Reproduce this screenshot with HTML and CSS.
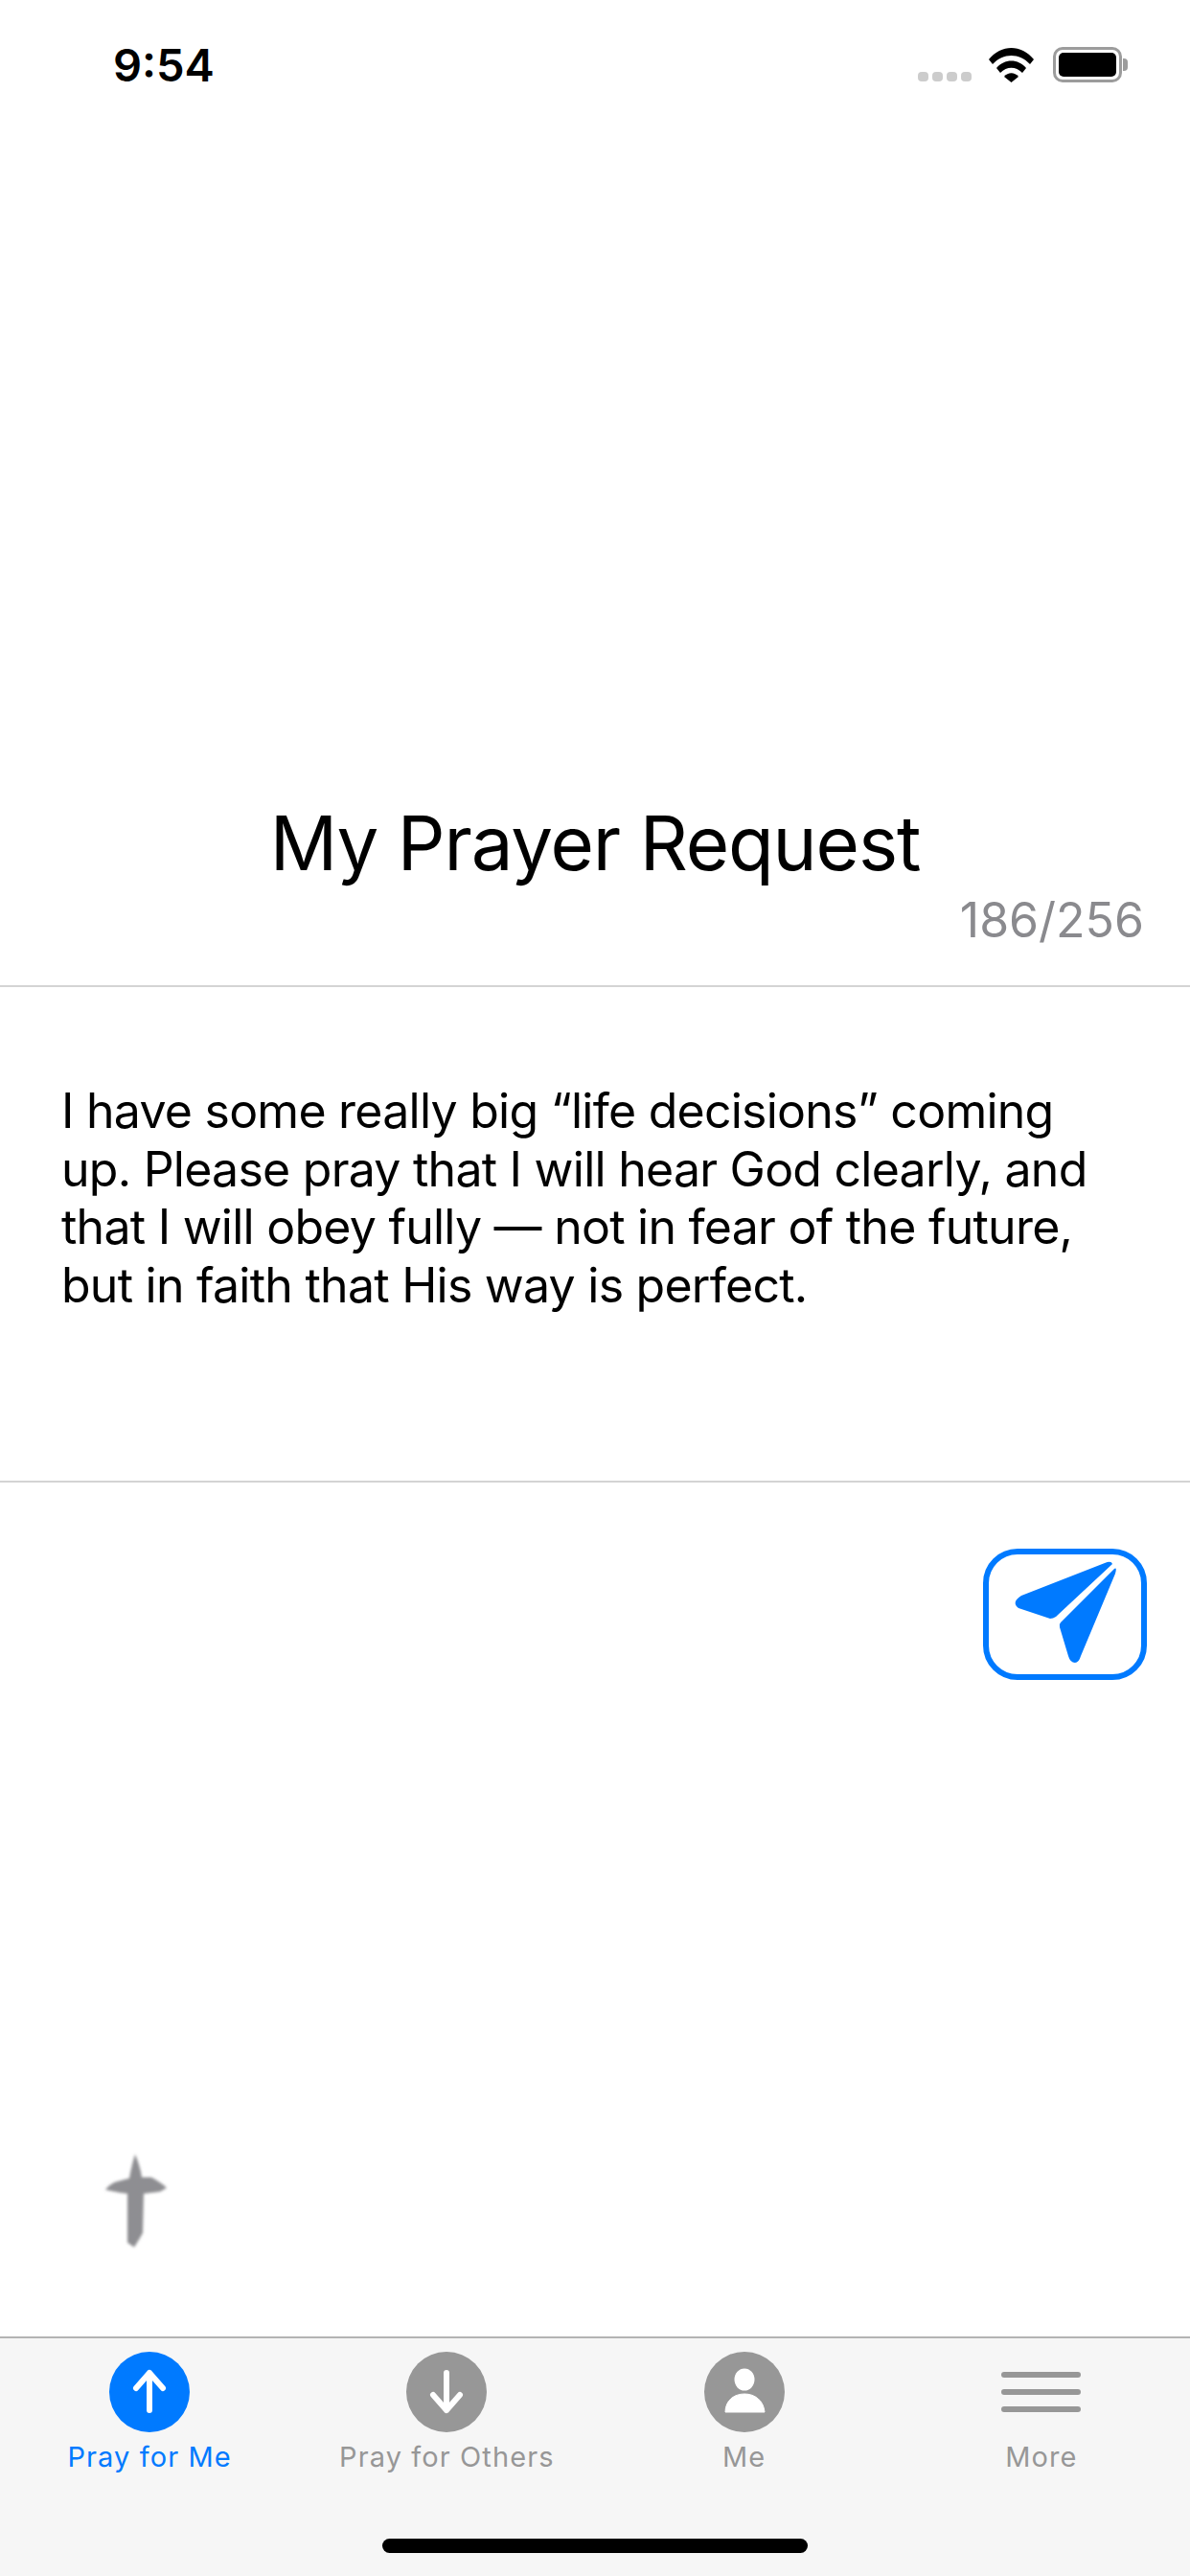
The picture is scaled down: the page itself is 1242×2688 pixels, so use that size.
FILE: index.html
```html
<!DOCTYPE html>
<html lang="en">

<head>
    <meta charset="UTF-8">
    <meta name="viewport" content="width=device-width, initial-scale=1.0">
    <title>My Prayer Request</title>
    <link rel="stylesheet" href="styles.css">
</head>

<body>
    <div class="container">
        <div class="status-bar">
            <div class="time">9:54</div>
            <div class="status-icons">
                <div class="signal">
                    <span class="signal-dot"></span>
                    <span class="signal-dot"></span>
                    <span class="signal-dot"></span>
                    <span class="signal-dot"></span>
                </div>
                <svg class="wifi" width="47" height="36" viewBox="0 0 47 36">
                    <path d="M0 12 C13 -4 34 -4 47 12 L43 17 C32 5 15 5 4 17 Z" fill="#000" />
                    <path d="M8 21 C16 11 31 11 39 21 L35 26 C28 19 19 19 12 26 Z" fill="#000" />
                    <path d="M16 30 C20 25 27 25 31 30 L23.5 36 Z" fill="#000" />
                </svg>
                <div class="battery">
                    <div class="battery-body">
                        <div class="battery-level"></div>
                    </div>
                    <div class="battery-nub"></div>
                </div>
            </div>
        </div>

        <div class="request-header">
            <div class="title">My Prayer Request</div>
            <div class="counter">186/256</div>
        </div>

        <div class="request-text">I have some really big “life decisions” coming up. Please pray that I will hear God clearly, and that I will obey fully — not in fear of the future, but in faith that His way is perfect.</div>

        <div class="send-row">
            <button class="send-button">
                <svg width="171" height="137" viewBox="0 0 171 137">
                    <path d="M40 49 L127 15 Q134 12 135 16 L76 71 Q73 73 70 73 L37 62 Q29 56 40 49 Z" fill="#007aff" />
                    <path d="M137 21 L81 77 Q79 79 80 82 L89 112 Q91 119 96 119 Q100 119 102 112 L138 26 Q140 19 137 21 Z" fill="#007aff" />
                </svg>
            </button>
        </div>

        <div class="cross-row">
            <svg class="cross" width="80" height="110" viewBox="0 0 80 110">
                <defs>
                    <filter id="crossBlur" x="-20%" y="-20%" width="140%" height="140%">
                        <feGaussianBlur stdDeviation="1.5" />
                    </filter>
                </defs>
                <path d="M39 6 C42 13 45 22 46 30 L56 30 C62 33 68 37 72 41 L65 45 L48 47 L47 88 L43 95 L38 103 L31 98 L31 47 L23 46 L8 43 C11 39 14 37 18 35 L33 31 C34 25 36 15 39 6 Z" fill="#8e8e92" filter="url(#crossBlur)" />
            </svg>
        </div>

        <div class="tab-bar">
            <div class="tab active">
                <div class="tab-circle">
                    <svg width="84" height="84" viewBox="0 0 84 84">
                        <path d="M42 61 V22 M28 38 L42 22 L56 38" fill="none" stroke="#fff" stroke-width="6" stroke-linecap="round" stroke-linejoin="round" />
                    </svg>
                </div>
                <div class="tab-label">Pray for Me</div>
            </div>
            <div class="tab">
                <div class="tab-circle">
                    <svg width="84" height="84" viewBox="0 0 84 84">
                        <path d="M42 22 V61 M28 45 L42 61 L56 45" fill="none" stroke="#fff" stroke-width="6" stroke-linecap="round" stroke-linejoin="round" />
                    </svg>
                </div>
                <div class="tab-label">Pray for Others</div>
            </div>
            <div class="tab">
                <div class="tab-circle">
                    <svg width="84" height="84" viewBox="0 0 84 84">
                        <ellipse cx="42" cy="29" rx="10.5" ry="11.5" fill="#fff" />
                        <path d="M22 63 C22 51 31 44 42 44 C53 44 62 51 63 63 Z" fill="#fff" stroke="#fff" stroke-width="1" stroke-linejoin="round" />
                    </svg>
                </div>
                <div class="tab-label">Me</div>
            </div>
            <div class="tab">
                <div class="tab-lines">
                    <span class="tab-line"></span>
                    <span class="tab-line"></span>
                    <span class="tab-line"></span>
                </div>
                <div class="tab-label">More</div>
            </div>
            <div class="home-indicator"></div>
        </div>
    </div>
</body>

</html>
```

FILE: styles.css
```css
* {
    box-sizing: border-box;
    font-family: 'Inter', 'Roboto', sans-serif;
}

body {
    margin: 0;
    padding: 0;
    background-color: #fff;
}

.container {
    width: 1242px;
    height: 2688px;
    display: flex;
    flex-direction: column;
    overflow: hidden;
}

/* status bar */
.status-bar {
    height: 132px;
    padding: 49px 65px 0 118px;
    display: flex;
    justify-content: space-between;
    align-items: flex-start;
}

.time {
    font-size: 47px;
    line-height: 37px;
    font-weight: 600;
    color: #000;
}

.status-icons {
    display: flex;
    align-items: flex-end;
    height: 37px;
}

.signal {
    display: flex;
    gap: 4px;
    margin-right: 18px;
    margin-bottom: 1px;
}

.signal-dot {
    width: 11px;
    height: 10px;
    border-radius: 4px;
    background-color: #ccc;
}

.wifi {
    margin-right: 20px;
}

.battery {
    display: flex;
    align-items: center;
}

.battery-body {
    width: 72px;
    height: 37px;
    border: 3px solid #9c9c9c;
    border-radius: 10px;
    padding: 3px;
}

.battery-level {
    width: 100%;
    height: 100%;
    background-color: #000;
    border-radius: 5px;
}

.battery-nub {
    width: 5px;
    height: 13px;
    margin-left: 1px;
    background-color: #9c9c9c;
    border-radius: 0 4px 4px 0;
}

/* title */
.request-header {
    height: 898px;
    border-bottom: 2px solid #d4d4d4;
    display: flex;
    flex-direction: column;
    justify-content: flex-end;
    padding-bottom: 38px;
}

.title {
    font-size: 78px;
    line-height: 94px;
    letter-spacing: -1.15px;
    text-align: center;
    color: #000;
    margin-bottom: 3px;
}

.counter {
    font-size: 50px;
    line-height: 60px;
    text-align: right;
    color: #8a8a8e;
    padding-right: 48px;
}

/* request text */
.request-text {
    height: 517px;
    padding: 99px 64px 0;
    border-bottom: 2px solid #d4d4d4;
    font-size: 50px;
    line-height: 60.5px;
    letter-spacing: -0.75px;
    color: #000;
}

.send-row {
    display: flex;
    justify-content: flex-end;
    padding: 69px 45px 0 0;
}

.send-button {
    width: 171px;
    height: 137px;
    padding: 0;
    border: 6px solid #007aff;
    border-radius: 36px;
    background: none;
    position: relative;
}

.send-button svg {
    position: absolute;
    top: -6px;
    left: -6px;
}

.cross-row {
    flex: 1;
    display: flex;
    align-items: flex-end;
    padding: 0 0 86px 102px;
}

.cross {
    display: block;
}

/* tab bar */
.tab-bar {
    height: 250px;
    position: relative;
    display: grid;
    grid-template-columns: repeat(4, 1fr);
    background-color: #f6f6f6;
    border-top: 2px solid #b4b4b4;
    padding: 14px 0 0 1px;
}

.tab {
    display: flex;
    flex-direction: column;
    align-items: center;
    color: #979797;
}

.tab.active {
    color: #007aff;
}

.tab-circle {
    width: 84px;
    height: 84px;
    border-radius: 50%;
    background-color: #979797;
}

.tab.active .tab-circle {
    background-color: #007aff;
}

.tab-circle svg {
    display: block;
}

.tab-lines {
    height: 84px;
    display: flex;
    flex-direction: column;
    gap: 12px;
    padding-top: 21px;
}

.tab-line {
    width: 83px;
    height: 6px;
    border-radius: 3px;
    background-color: #979797;
}

.tab-label {
    margin-top: 8px;
    font-size: 29px;
    line-height: 36px;
    letter-spacing: 1.1px;
}

.home-indicator {
    position: absolute;
    left: 399px;
    top: 209px;
    width: 444px;
    height: 15px;
    border-radius: 8px;
    background-color: #000;
}
```
